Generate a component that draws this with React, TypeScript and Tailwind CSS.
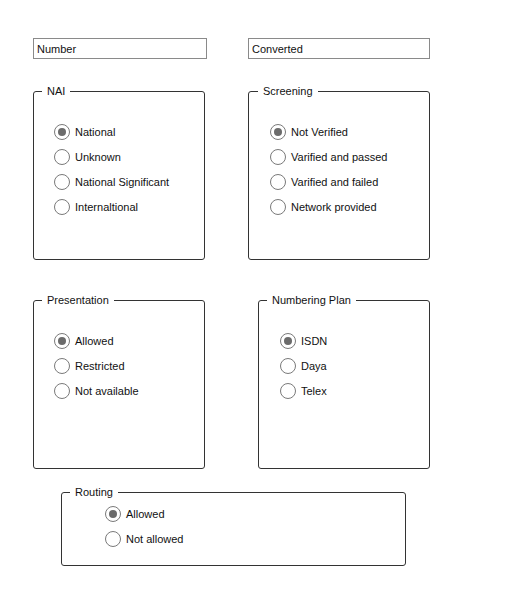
import { useState } from "react";

type GroupProps = {
  title: string;
  options: string[];
  className: string;
  bodyClass: string;
  legendClass?: string;
};

function Radio({ label, checked, onClick }: { label: string; checked: boolean; onClick: () => void }) {
  return (
    <label className="flex items-center h-[16px] cursor-pointer" onClick={onClick}>
      <span className="w-[16px] h-[16px] rounded-full border border-[#7a7a7a] bg-white flex items-center justify-center shrink-0">
        {checked && <span className="w-[8px] h-[8px] rounded-full bg-[#6b6b6b]" />}
      </span>
      <span className="ml-[5px] text-[11px] leading-[13px] text-[#111]">{label}</span>
    </label>
  );
}

function Group({ title, options, className, bodyClass, legendClass = "ml-[8px]" }: GroupProps) {
  const [value, setValue] = useState(options[0]);
  return (
    <fieldset className={`border border-[#333] rounded-[3px] m-0 p-0 ${className}`}>
      <legend className={`px-[5px] text-[11px] leading-[13px] text-[#111] ${legendClass}`}>{title}</legend>
      <div className={`flex flex-col gap-[9px] ${bodyClass}`}>
        {options.map((o) => (
          <Radio key={o} label={o} checked={value === o} onClick={() => setValue(o)} />
        ))}
      </div>
    </fieldset>
  );
}

export default function App() {
  const [num, setNum] = useState("Number");
  const [conv, setConv] = useState("Converted");

  return (
    <div
      className="min-h-screen bg-white pt-[38px] pl-[33px]"
      style={{ fontFamily: '"Liberation Sans", Arial, sans-serif' }}
    >
      <div className="flex">
        <input
          value={num}
          onChange={(e) => setNum(e.target.value)}
          className="w-[174px] h-[21px] border border-[#8a8a8a] px-[3px] text-[11px] text-[#111] outline-none"
        />
        <input
          value={conv}
          onChange={(e) => setConv(e.target.value)}
          className="ml-[41px] w-[182px] h-[21px] border border-[#8a8a8a] px-[3px] text-[11px] text-[#111] outline-none"
        />
      </div>

      <div className="flex mt-[26px]">
        <Group
          title="NAI"
          options={["National", "Unknown", "National Significant", "Internaltional"]}
          className="w-[172px] h-[175px]"
          bodyClass="pt-[26px] pl-[20px]"
        />
        <Group
          title="Screening"
          options={["Not Verified", "Varified and passed", "Varified and failed", "Network provided"]}
          className="ml-[43px] w-[182px] h-[175px]"
          bodyClass="pt-[26px] pl-[21px]"
          legendClass="ml-[9px]"
        />
      </div>

      <div className="flex mt-[34px]">
        <Group
          title="Presentation"
          options={["Allowed", "Restricted", "Not available"]}
          className="w-[172px] h-[175px]"
          bodyClass="pt-[26px] pl-[20px]"
        />
        <Group
          title="Numbering Plan"
          options={["ISDN", "Daya", "Telex"]}
          className="ml-[53px] w-[172px] h-[175px]"
          bodyClass="pt-[26px] pl-[21px]"
        />
      </div>

      <div className="flex mt-[17px] ml-[28px]">
        <Group
          title="Routing"
          options={["Allowed", "Not allowed"]}
          className="w-[345px] h-[80px]"
          bodyClass="pt-[7px] pl-[43px]"
        />
      </div>
    </div>
  );
}
